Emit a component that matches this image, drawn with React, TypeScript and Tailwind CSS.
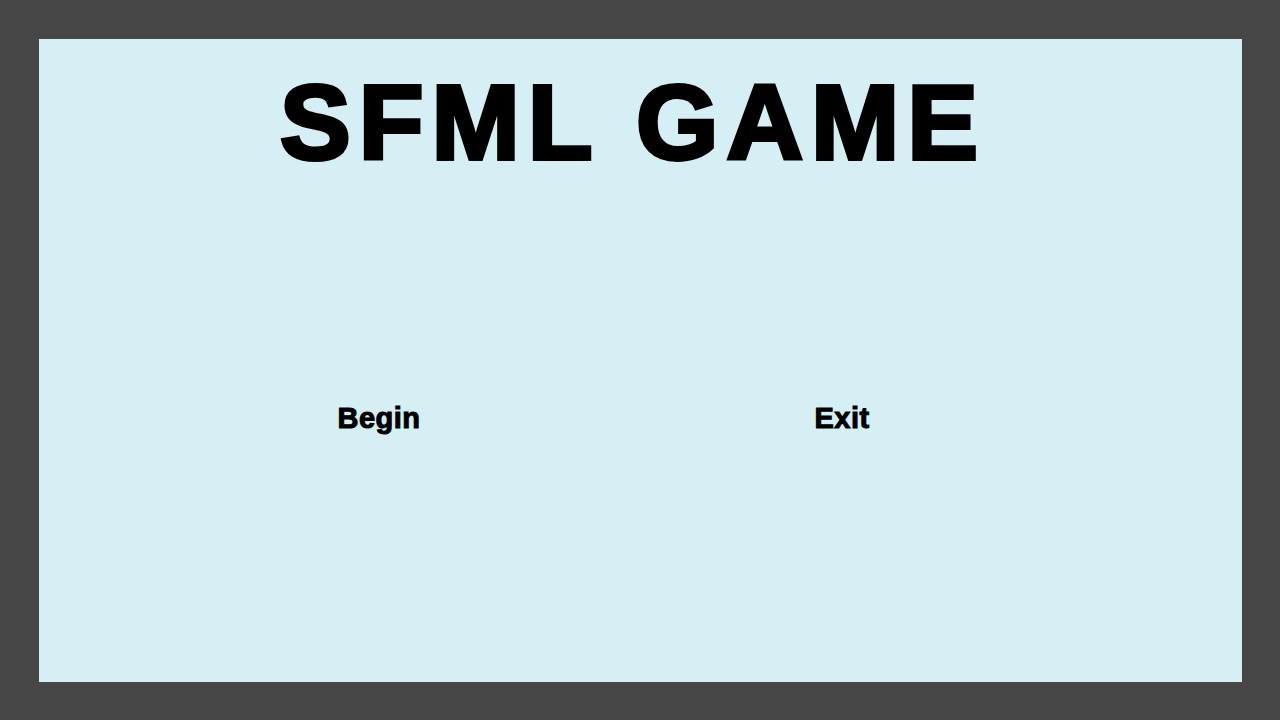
export default function App() {
  return (
    <div className="w-[1280px] h-[720px] bg-[#464646] pt-[39px] pl-[39px]">
      <div className="w-[1203px] h-[643px] bg-[#d6eff4] flex flex-col font-['Liberation_Sans',Arial,sans-serif] font-bold text-black">
        <h1 className="mt-[30px] ml-[241px] text-[106px] leading-none tracking-[8px] [-webkit-text-stroke:4px_black] whitespace-nowrap">
          SFML GAME
        </h1>
        <div className="mt-[229px] flex text-[29px] leading-none tracking-[0.5px] [-webkit-text-stroke:1px_black]">
          <div className="ml-[260px] w-[160px] text-center">Begin</div>
          <div className="ml-[303px] w-[160px] text-center">Exit</div>
        </div>
      </div>
    </div>
  )
}
